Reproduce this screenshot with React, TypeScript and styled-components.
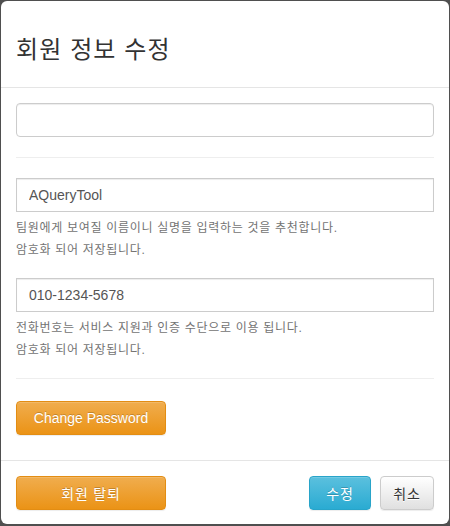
import React, { useState } from "react";
import styled, { createGlobalStyle } from "styled-components";

const GlobalStyle = createGlobalStyle`
  html, body {
    margin: 0;
    padding: 0;
    background: #4f4f4f;
  }
  body {
    font-family: "Liberation Sans", "Noto Sans CJK KR", sans-serif;
    font-size: 14px;
    color: #333;
  }
  * {
    box-sizing: border-box;
  }
`;

const Backdrop = styled.div`
  padding: 1px;
  min-height: 526px;
`;

const Modal = styled.div`
  width: 448px;
  background: #fff;
  border-radius: 6px;
  display: flex;
  flex-direction: column;
  overflow: hidden;
`;

const Header = styled.div`
  height: 87px;
  padding: 6px 15px 0;
  display: flex;
  align-items: center;
  border-bottom: 1px solid #e5e5e5;
`;

const Title = styled.h4`
  margin: 0;
  font-size: 24px;
  font-weight: normal;
  letter-spacing: 1.1px;
  color: #333;
`;

const Body = styled.div`
  padding: 15px 15px 25px;
  display: flex;
  flex-direction: column;
`;

const Input = styled.input<{ $rounded?: boolean }>`
  height: 34px;
  width: 100%;
  padding: 6px 12px;
  font-family: inherit;
  font-size: 14px;
  color: #555;
  background: #fff;
  border: 1px solid #ccc;
  border-radius: ${(p) => (p.$rounded ? "4px" : "0")};
  box-shadow: inset 0 1px 1px rgba(0, 0, 0, 0.075);
  outline: none;
`;

const Divider = styled.hr<{ $top: number; $bottom: number }>`
  border: 0;
  border-top: 1px solid #eee;
  margin: ${(p) => `${p.$top}px 0 ${p.$bottom}px`};
  height: 0;
`;

const Help = styled.div<{ $gap?: number }>`
  margin: 5px 0 ${(p) => p.$gap ?? 0}px;
  font-size: 12px;
  line-height: 22px;
  letter-spacing: 0.7px;
  color: #737373;
`;

const Button = styled.button<{
  $variant: "warning" | "info" | "default";
  $width: number;
  $hangul?: boolean;
}>`
  height: 34px;
  width: ${(p) => p.$width}px;
  padding: 0;
  font-family: inherit;
  font-size: 14px;
  letter-spacing: ${(p) => (p.$hangul ? "0.8px" : "0")};
  border-radius: 4px;
  cursor: pointer;
  ${(p) =>
    p.$variant === "warning"
      ? `
    color: #fff;
    text-shadow: 0 -1px 0 rgba(0,0,0,0.2);
    background: linear-gradient(to bottom, #f0ad4e 0%, #eb9316 100%);
    border: 1px solid #e38d13;
  `
      : p.$variant === "info"
      ? `
    color: #fff;
    text-shadow: 0 -1px 0 rgba(0,0,0,0.2);
    background: linear-gradient(to bottom, #5bc0de 0%, #2aabd2 100%);
    border: 1px solid #28a4c9;
  `
      : `
    color: #333;
    text-shadow: 0 1px 0 #fff;
    background: linear-gradient(to bottom, #fff 0%, #e0e0e0 100%);
    border: 1px solid #ccc;
  `}
  box-shadow: inset 0 1px 0 rgba(255, 255, 255, 0.15), 0 1px 1px rgba(0, 0, 0, 0.075);
`;

const Footer = styled.div`
  padding: 15px 15px 14px;
  border-top: 1px solid #e5e5e5;
  display: flex;
  justify-content: space-between;
  align-items: center;
`;

const Actions = styled.div`
  display: flex;
  gap: 9px;
`;

const App = () => {
  const [email, setEmail] = useState("");
  const [name, setName] = useState("AQueryTool");
  const [phone, setPhone] = useState("010-1234-5678");

  return (
    <>
      <GlobalStyle />
      <Backdrop>
        <Modal>
          <Header>
            <Title>회원 정보 수정</Title>
          </Header>
          <Body>
            <Input $rounded value={email} onChange={(e) => setEmail(e.target.value)} />
            <Divider $top={20} $bottom={20} />
            <Input value={name} onChange={(e) => setName(e.target.value)} />
            <Help $gap={17}>
              팀원에게 보여질 이름이니 실명을 입력하는 것을 추천합니다.
              <br />
              암호화 되어 저장됩니다.
            </Help>
            <Input value={phone} onChange={(e) => setPhone(e.target.value)} />
            <Help>
              전화번호는 서비스 지원과 인증 수단으로 이용 됩니다.
              <br />
              암호화 되어 저장됩니다.
            </Help>
            <Divider $top={17} $bottom={22} />
            <div>
              <Button $variant="warning" $width={150}>
                Change Password
              </Button>
            </div>
          </Body>
          <Footer>
            <Button $variant="warning" $width={150} $hangul>
              회원 탈퇴
            </Button>
            <Actions>
              <Button $variant="info" $width={62} $hangul>
                수정
              </Button>
              <Button $variant="default" $width={54} $hangul>
                취소
              </Button>
            </Actions>
          </Footer>
        </Modal>
      </Backdrop>
    </>
  );
};

export default App;
